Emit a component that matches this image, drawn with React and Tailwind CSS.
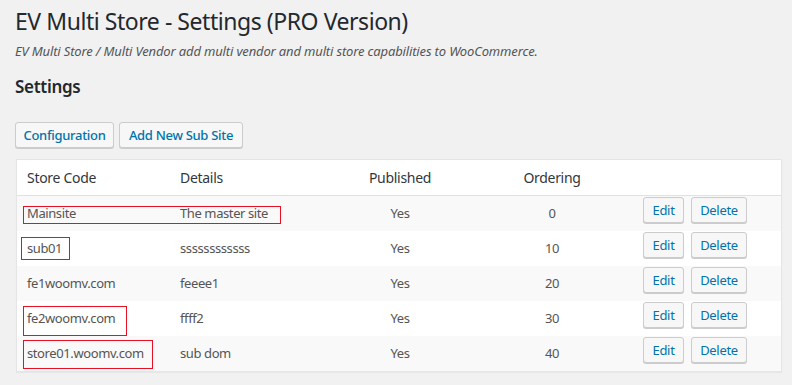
import React from "react";

const rows = [
  { code: "Mainsite", details: "The master site", pub: "Yes", ord: "0", box: "mainsite" },
  { code: "sub01", details: "ssssssssssss", pub: "Yes", ord: "10", box: "sub01" },
  { code: "fe1woomv.com", details: "feeee1", pub: "Yes", ord: "20" },
  { code: "fe2woomv.com", details: "ffff2", pub: "Yes", ord: "30", box: "fe2" },
  { code: "store01.woomv.com", details: "sub dom", pub: "Yes", ord: "40", box: "store01" },
];

function Btn({ children, className = "" }) {
  return (
    <button
      className={
        "h-[26px] rounded-[3px] border border-[#cccccc] bg-[#f7f7f7] text-[13px] leading-[24px] tracking-[-0.3px] text-[#0073aa] shadow-[0_1px_0_#cccccc] " +
        className
      }
    >
      {children}
    </button>
  );
}

function RedBox({ kind }) {
  if (kind === "mainsite")
    return <div className="pointer-events-none absolute left-[6px] top-[10px] h-[18px] w-[258px] border border-[#e81123]" />;
  if (kind === "sub01")
    return <div className="pointer-events-none absolute left-[4px] top-[6px] h-[23px] w-[49px] border border-[#e81123]" />;
  if (kind === "fe2")
    return <div className="pointer-events-none absolute left-[6px] top-[5px] h-[30px] w-[104px] border border-[#e81123]" />;
  if (kind === "store01")
    return <div className="pointer-events-none absolute left-[6px] top-[4px] h-[29px] w-[130px] border border-[#e81123]" />;
  return null;
}

export default function App() {
  return (
    <div
      className="min-h-[385px] w-[792px] bg-[#f1f1f1] pl-[15px] pr-[10px] text-[#444]"
      style={{ fontFamily: '"Noto Sans", "Open Sans", sans-serif' }}
    >
      <h1 className="pt-[6px] text-[23px] leading-[30px] font-normal tracking-[-0.45px] text-[#23282d]">
        EV Multi Store - Settings (PRO Version)
      </h1>
      <p className="mt-[6px] text-[13px] leading-[18px] italic tracking-[-0.15px] text-[#555]">
        EV Multi Store / Multi Vendor add multi vendor and multi store capabilities to WooCommerce.
      </p>
      <h2 className="mt-[16px] text-[17px] leading-[22px] font-semibold tracking-[-0.3px] text-[#23282d]">Settings</h2>
      <div className="mt-[24px] flex gap-[5px]">
        <Btn className="w-[99px] font-medium">Configuration</Btn>
        <Btn className="w-[124px] font-medium">Add New Sub Site</Btn>
      </div>
      <div className="ml-px mt-[11px] border border-[#e5e5e5] bg-white shadow-[0_1px_1px_rgba(0,0,0,0.04)]">
        <div className="flex h-[36px] items-center border-b border-[#e1e1e1] text-[14px] tracking-[-0.3px] text-[#32373c]">
          <div className="w-[153px] pl-[10px]">Store Code</div>
          <div className="w-[189px] pl-[10px]">Details</div>
          <div className="w-[82px] text-center">Published</div>
          <div className="w-[202px] pl-[61px] pr-[41px] text-center">Ordering</div>
          <div className="flex-1" />
        </div>
        {rows.map((r, i) => (
          <div
            key={r.code}
            className={
              "relative flex h-[35px] text-[13px] tracking-[-0.4px] text-[#555] " +
              (i % 2 === 0 ? "bg-[#f9f9f9]" : "bg-white")
            }
          >
            <RedBox kind={r.box} />
            <div className="flex w-[153px] items-center pl-[10px] pt-px">{r.code}</div>
            <div className="flex w-[189px] items-center pl-[10px] pt-px">{r.details}</div>
            <div className="flex w-[82px] items-center justify-center pt-px">{r.pub}</div>
            <div className="flex w-[202px] items-center justify-center pl-[61px] pr-[41px] pt-px">{r.ord}</div>
            <div className="flex gap-[7px] pt-px">
              <Btn className="w-[41px]">Edit</Btn>
              <Btn className="w-[56px]">Delete</Btn>
            </div>
          </div>
        ))}
      </div>
    </div>
  );
}
